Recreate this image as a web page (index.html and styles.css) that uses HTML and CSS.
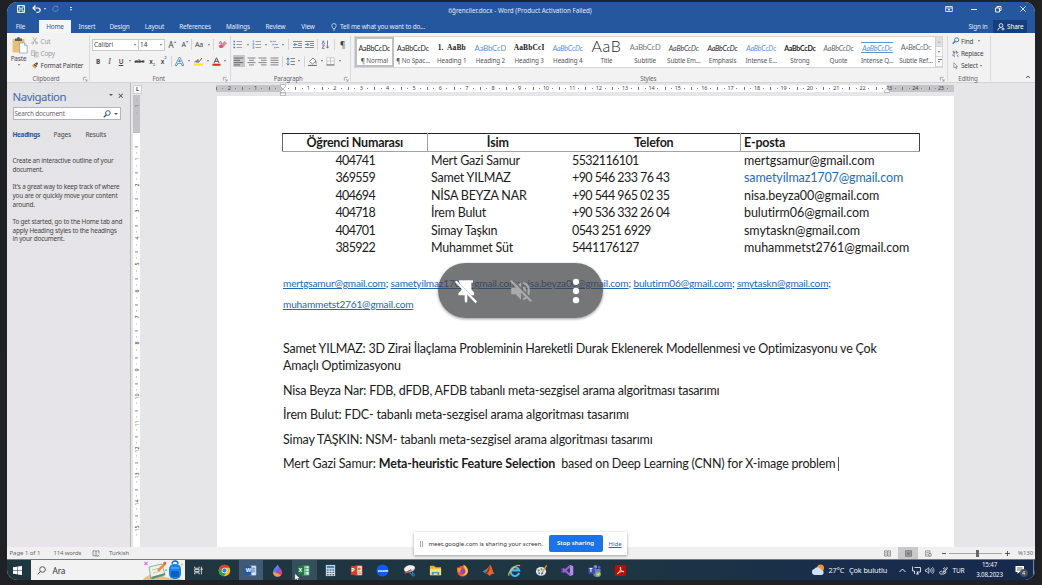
FILE: index.html
```html
<!DOCTYPE html>
<html lang="tr">
<head>
<meta charset="utf-8">
<title>öğrenciler.docx - Word</title>
<link rel="stylesheet" href="styles.css">
</head>
<body>
<div class="desktop">
  <header class="titlebar">
    <div class="quick">
      <svg class="q-save" viewBox="0 0 8 8"><path d="M.5.5h7v7h-7zM2 .5v2.700h4V.5M2 7.500V5h4v2.500" fill="none" stroke="#fff" stroke-width=".9"/></svg>
      <svg class="q-undo" viewBox="0 0 9 8"><path d="M1 3h5a2 2 0 0 1 0 4.300H4.500M3.500.5 1 3l2.500 2.500" fill="none" stroke="#fff" stroke-width="1.200"/></svg>
      <i class="caret white"></i>
      <svg class="q-redo" viewBox="0 0 8 8"><path d="M5.500 1.200A3 3 0 1 0 7 4M4.500.8h2v2" fill="none" stroke="#6f93c8" stroke-width=".9"/></svg>
      <span class="q-more"><i class="caret white"></i></span>
    </div>
    <div class="doc-title">öğrenciler.docx - Word (Product Activation Failed)</div>
    <div class="win-buttons">
      <svg viewBox="0 0 8 8"><path d="M.7 1.500h6.600v5H.7zM.7 3h6.600M4 6V4M3 5l1-1 1 1" fill="none" stroke="#fff" stroke-width=".8"/></svg>
      <svg viewBox="0 0 8 8"><path d="M1 4.500h6" stroke="#fff" stroke-width=".9"/></svg>
      <svg viewBox="0 0 8 8"><path d="M1.500 3h4v4h-4zM3 3V1.500h4v4H5.500" fill="none" stroke="#fff" stroke-width=".9"/></svg>
      <svg viewBox="0 0 8 8"><path d="m1.300 1.300 5.400 5.400M6.700 1.300 1.300 6.700" stroke="#fff" stroke-width=".8"/></svg>
    </div>
  </header>
  <nav class="tabs">
    <span class="tab t-file">File</span><span class="tab t-home">Home</span><span class="tab t-insert">Insert</span><span class="tab t-design">Design</span><span class="tab t-layout">Layout</span><span class="tab t-ref">References</span><span class="tab t-mail">Mailings</span><span class="tab t-review">Review</span><span class="tab t-view">View</span>
    <span class="tell"><svg viewBox="0 0 6 8"><path d="M2 5.500C2 4.500.8 4 .8 2.700a2.200 2.200 0 0 1 4.400 0C5.200 4 4 4.500 4 5.500zM2 7h2" fill="none" stroke="#e3ebf6" stroke-width=".7"/></svg>Tell me what you want to do...</span>
    <span class="signin">Sign in</span>
    <span class="share"><svg viewBox="0 0 8 8"><circle cx="4" cy="2.500" r="1.900" fill="none" stroke="#fff" stroke-width=".8"/><path d="M.8 7.500C1 5.500 2.300 4.600 4 4.500M6 4.500v3M4.500 6h3" fill="none" stroke="#fff" stroke-width=".8"/></svg>Share</span>
  </nav>

  <section class="ribbon">
    <div class="group g-clip">
      <div class="clip-body">
        <div class="paste">
          <svg viewBox="0 0 16 17"><rect x=".5" y="2" width="12" height="13.500" rx=".8" fill="#eabf74"/><path d="M3 1.500h2a1.500 1.500 0 0 1 3 0h2V4H3z" fill="#5d5d60"/><path d="M7.500 6h5l2.700 2.700V16H7.500z" fill="#fff" stroke="#8c96a3" stroke-width=".7"/><path d="M12.500 6v2.700h2.700" fill="none" stroke="#8c96a3" stroke-width=".6"/></svg>
          <span>Paste</span><i class="caret"></i>
        </div>
        <div class="clip-list">
          <span class="off"><svg viewBox="0 0 8 8"><path d="M2 .5 5.500 6M6 .5 2.500 6" stroke="#9a9a9e" stroke-width=".8"/><circle cx="1.800" cy="6.500" r="1.100" fill="none" stroke="#9a9a9e" stroke-width=".7"/><circle cx="6" cy="6.500" r="1.100" fill="none" stroke="#9a9a9e" stroke-width=".7"/></svg>Cut</span>
          <span class="off"><svg viewBox="0 0 8 8"><path d="M.5.800h3.800v5H.5zM3.500 2.500h4v5h-4zM4.500 4h2M4.500 5.500h2M1.200 2.500h1.500" fill="none" stroke="#a5a5a9" stroke-width=".7"/></svg>Copy</span>
          <span><svg viewBox="0 0 8 8"><path d="M4 1.500 6.500 3.500 7.500 1 6 .5z" fill="#48484b"/><path d="M.5 3.500 4 2.500l2 2L4.500 7.500z" fill="#e9a65a"/><path d="m3.600 1.800 3 2.500-1 1-3-2.500z" fill="#555"/></svg>Format Painter</span>
        </div>
      </div>
      <div class="g-label">Clipboard<svg class="launch" viewBox="0 0 5 5"><path d="M.4 4V.4H4M2 2l2.300 2.300M4.500 2.500v2h-2" fill="none" stroke="#88888c" stroke-width=".7"/></svg></div>
    </div>

    <div class="group g-font">
      <div class="row r1">
        <span class="combo c-name">Calibri<i class="caret"></i></span><span class="combo c-size">14<i class="caret"></i></span>
        <span class="w14 big">A<sup class="blue">▴</sup></span><span class="w11 mid">A<sup class="blue">▾</sup></span><span class="w3 sep"></span>
        <span class="w12 aa">Aa</span><span class="w7"><i class="caret"></i></span><span class="w3 sep"></span>
        <span class="w14"><svg viewBox="0 0 9 9"><path d="m3.500 4 3-3L9 3 6 6.500z" fill="#e58a97"/><path d="M.5 6 3.500 4 6 6.500 4 8H2z" fill="#d9596c"/><path d="m1 4 1.500-3L4 4M1.500 3h2" fill="none" stroke="#777" stroke-width=".7"/></svg></span>
      </div>
      <div class="row r2">
        <span class="w12 fb">B</span><span class="w11 fi">I</span><span class="w12 fu">U</span><span class="w6"><i class="caret"></i></span><span class="w13 fs">abc</span><span class="w12 fx">x<sub>2</sub></span><span class="w11 fx">x<sup>2</sup></span><span class="w4 sep"></span>
        <span class="w13"><svg viewBox="0 0 9 9"><path d="M1.200 8 4.500 1.200 7.800 8M2.500 5.500h4" fill="none" stroke="#4b86cc" stroke-width="2.300" stroke-linejoin="round" stroke-linecap="round"/><path d="M1.200 8 4.500 1.200 7.800 8M2.500 5.500h4" fill="none" stroke="#eff5fc" stroke-width=".9"/></svg></span><span class="w5"><i class="caret"></i></span>
        <span class="w14"><svg viewBox="0 0 9 9"><rect y="6.500" width="9" height="2.200" fill="#f7ee12"/><path d="M.8 5.500c0-2 2.200-1.500 2.200 0V3M4 2v3.500M8 1 4.500 5.500" fill="none" stroke="#555" stroke-width=".9"/></svg></span><span class="w5"><i class="caret"></i></span>
        <span class="w12"><svg viewBox="0 0 9 9"><rect x=".5" y="6.700" width="8" height="2.100" fill="#ee2323"/><path d="M2 6 4.500.8 7 6M3 4.300h3" fill="none" stroke="#555" stroke-width="1"/></svg></span><span class="w6"><i class="caret"></i></span>
      </div>
      <div class="g-label">Font<svg class="launch" viewBox="0 0 5 5"><path d="M.4 4V.4H4M2 2l2.300 2.300M4.500 2.500v2h-2" fill="none" stroke="#88888c" stroke-width=".7"/></svg></div>
    </div>

    <div class="group g-para">
      <div class="row r1">
        <span class="w14"><svg viewBox="0 0 9 9"><path d="M3.500 1.500H9M3.500 4.500H9M3.500 7.500H9" stroke="#8b8b8f" stroke-width=".8"/><path d="M.5 1.500H2M.5 4.500H2M.5 7.500H2" stroke="#3f7cc6" stroke-width="1.500"/></svg></span><span class="w6"><i class="caret"></i></span>
        <span class="w12"><svg viewBox="0 0 9 9"><path d="M3.500 1.500H9M3.500 4.500H9M3.500 7.500H9" stroke="#8b8b8f" stroke-width=".8"/><path d="M1.300.3v2.200M.6 3.700h1.200v1.500H.6M.6 6.700h1.200v1.600H.6" fill="none" stroke="#3f7cc6" stroke-width=".7"/></svg></span><span class="w6"><i class="caret"></i></span>
        <span class="w12"><svg viewBox="0 0 9 9"><path d="M2.500 1.500H6M4.500 4.500H8M6 7.500h3" stroke="#8b8b8f" stroke-width=".8"/><path d="M.5 1.500h1M2.500 4.500h1M4.300 7.500h1" stroke="#3f7cc6" stroke-width="1.600"/></svg></span><span class="w5"><i class="caret"></i></span><span class="w5 sep"></span>
        <span class="w13"><svg viewBox="0 0 9 9"><path d="M0 1.500h9M5 3.500h4M5 5.500h4M0 7.500h9" stroke="#7d7d82" stroke-width=".9"/><path d="M4.500 4.500H.8M2.300 3 .8 4.500 2.300 6" fill="none" stroke="#3f7cc6" stroke-width=".9"/></svg></span>
        <span class="w12"><svg viewBox="0 0 9 9"><path d="M0 1.500h9M5 3.500h4M5 5.500h4M0 7.500h9" stroke="#7d7d82" stroke-width=".9"/><path d="M0 4.500h3.700M2.300 3l1.500 1.500L2.300 6" fill="none" stroke="#3f7cc6" stroke-width=".9"/></svg></span><span class="w4 sep"></span>
        <span class="w12"><svg viewBox="0 0 9 9"><path d="m1 4 1.300-3.300L3.600 4" fill="none" stroke="#3f7cc6" stroke-width=".9"/><path d="M1 5h2.500L1 8.300h2.600" fill="none" stroke="#9456a8" stroke-width=".9"/><path d="M6.500.5v7.500M5 6.500l1.500 1.700L8 6.500" fill="none" stroke="#66666a" stroke-width=".8"/></svg></span><span class="w5 sep"></span>
        <span class="w12 pil">¶</span>
      </div>
      <div class="row r2">
        <span class="w15 on"><svg viewBox="0 0 9 9"><path d="M0 1h9M0 3.300h6M0 5.600h9M0 7.900h6" stroke="#5f5f63" stroke-width=".9"/></svg></span>
        <span class="w11"><svg viewBox="0 0 9 9"><path d="M.5 1h8M2 3.300h5M.5 5.600h8M2 7.900h5" stroke="#77777b" stroke-width=".9"/></svg></span>
        <span class="w12"><svg viewBox="0 0 9 9"><path d="M.5 1h8M3 3.300h5.500M.5 5.600h8M3 7.900h5.500" stroke="#77777b" stroke-width=".9"/></svg></span>
        <span class="w11"><svg viewBox="0 0 9 9"><path d="M.5 1h8M.5 3.300h8M.5 5.600h8M.5 7.900h8" stroke="#77777b" stroke-width=".9"/></svg></span><span class="w5 sep"></span>
        <span class="w11"><svg viewBox="0 0 9 9"><path d="M4.500 1.500H9M4.500 4.500H9M4.500 7.500H9" stroke="#77777b" stroke-width=".9"/><path d="M2 1v7M.6 2.500 2 .8l1.400 1.700M.6 6.500 2 8.200l1.400-1.700" fill="none" stroke="#3f7cc6" stroke-width=".9"/></svg></span><span class="w6"><i class="caret"></i></span><span class="w5 sep"></span>
        <span class="w12"><svg viewBox="0 0 9 9"><path d="M1.500 4.500 5 1l3 3-3.500 3z" fill="#fff" stroke="#66666a" stroke-width=".8"/><path d="M8 4.500v2M0 8.400h9" stroke="#66666a" stroke-width="1"/></svg></span><span class="w6"><i class="caret"></i></span>
        <span class="w12"><svg viewBox="0 0 9 9"><path d="M.8.8h7.400v6.500H.8zM4.500.8v6.500M.8 4h7.400" fill="#fff" stroke="#b7b7bb" stroke-width=".7"/><path d="M.5 8h8" stroke="#66666a"/></svg></span><span class="w7"><i class="caret"></i></span>
      </div>
      <div class="g-label">Paragraph<svg class="launch" viewBox="0 0 5 5"><path d="M.4 4V.4H4M2 2l2.300 2.300M4.500 2.500v2h-2" fill="none" stroke="#88888c" stroke-width=".7"/></svg></div>
    </div>

    <div class="group g-styles">
      <div class="gallery">
        <div class="style sel"><b class="s-n">AaBbCcDc</b><span>¶ Normal</span></div>
        <div class="style"><b class="s-n">AaBbCcDc</b><span>¶ No Spac...</span></div>
        <div class="style"><b class="s-h1">1.&nbsp; AaBb</b><span>Heading 1</span></div>
        <div class="style"><b class="s-h2">AaBbCcD</b><span>Heading 2</span></div>
        <div class="style"><b class="s-h3">AaBbCcI</b><span>Heading 3</span></div>
        <div class="style"><b class="s-h4">AaBbCcDc</b><span>Heading 4</span></div>
        <div class="style"><b class="s-t">AaB</b><span>Title</span></div>
        <div class="style"><b class="s-sub">AaBbCcD</b><span>Subtitle</span></div>
        <div class="style"><b class="s-se">AaBbCcDc</b><span>Subtle Em...</span></div>
        <div class="style"><b class="s-em">AaBbCcDc</b><span>Emphasis</span></div>
        <div class="style"><b class="s-h4">AaBbCcDc</b><span>Intense E...</span></div>
        <div class="style"><b class="s-st">AaBbCcDc</b><span>Strong</span></div>
        <div class="style"><b class="s-q">AaBbCcDc</b><span>Quote</span></div>
        <div class="style"><b class="s-iq">AaBbCcDc</b><span>Intense Q...</span></div>
        <div class="style"><b class="s-sr">AaBbCcDc</b><span>Subtle Ref...</span></div>
        <div class="scroller"><span class="dim"><i class="caret up"></i></span><span><i class="caret"></i></span><span class="more"><i class="caret"></i></span></div>
      </div>
      <div class="g-label">Styles<svg class="launch" viewBox="0 0 5 5"><path d="M.4 4V.4H4M2 2l2.300 2.300M4.500 2.500v2h-2" fill="none" stroke="#88888c" stroke-width=".7"/></svg></div>
    </div>

    <div class="group g-edit">
      <div class="edit-list">
        <span><svg viewBox="0 0 8 8"><circle cx="5" cy="3" r="2.200" fill="none" stroke="#3a70b8" stroke-width="1"/><path d="M3.400 4.600.8 7.200" stroke="#3a70b8" stroke-width="1.400"/></svg>Find<i class="caret gap"></i></span>
        <span><svg viewBox="0 0 8 8"><path d="M.8 1.500c1.800-.5 1.800.3 1.800 2-2 0-2.200-1.200 0-1M4.500.5v3c2 .3 2-2 0-1.600" fill="none" stroke="#5b5b60" stroke-width=".8"/><path d="M3.200 5.200c-1.700-.3-1.700 2.300 0 2M7 5.200c-1.700-.3-1.700 2.300 0 2M1 4.500v2" fill="none" stroke="#7a4fa8" stroke-width=".8"/></svg>Replace</span>
        <span><svg viewBox="0 0 8 8"><path d="M2 .8v5.500l1.400-1.200.9 2.200.9-.4-.9-2.100h1.800z" fill="#fff" stroke="#77777b" stroke-width=".7"/></svg>Select<i class="caret"></i></span>
      </div>
      <div class="g-label">Editing</div>
    </div>
    <svg class="collapse" viewBox="0 0 6 4"><path d="m1 3 2-2 2 2" fill="none" stroke="#555" stroke-width="1"/></svg>
  </section>

  <main class="work">
    <aside class="navpane">
      <div class="np-head"><span class="np-title">Navigation</span><i class="caret dark"></i><svg viewBox="0 0 6 6"><path d="m.8.8 4.400 4.400M5.200.8.8 5.200" stroke="#555" stroke-width="1.100"/></svg></div>
      <div class="np-search">Search document<svg viewBox="0 0 8 8"><circle cx="4.900" cy="3" r="2.300" fill="none" stroke="#2b5db0" stroke-width="1"/><path d="M3.200 4.800.8 7.200" stroke="#2b5db0" stroke-width="1.500"/></svg><i class="caret dark"></i></div>
      <div class="np-tabs"><b>Headings</b><span>Pages</span><span>Results</span></div>
      <p>Create an interactive outline of your<br>document.</p>
      <p>It's a great way to keep track of where<br>you are or quickly move your content<br>around.</p>
      <p>To get started, go to the Home tab and<br>apply Heading styles to the headings<br>in your document.</p>
    </aside>
    <div class="vcol">
      <div class="corner">L</div>
      <div class="vruler"><i class="neg">1</i><i></i><i>1</i><i>2</i><i>3</i><i>4</i><i>5</i><i>6</i><i>7</i><i>8</i><i>9</i><i>10</i><i>11</i><i>12</i><i>13</i><i>14</i><i>15</i><i></i></div>
    </div>
    <div class="canvas">
      <div class="hruler">
        <i>2</i><i>1</i><i></i><i>1</i><i>2</i><i>3</i><i>4</i><i>5</i><i>6</i><i>7</i><i>8</i><i>9</i><i>10</i><i>11</i><i>12</i><i>13</i><i>14</i><i>15</i><i>16</i><i>17</i><i>18</i><i>19</i><i>20</i><i>21</i><i>22</i><i>23</i><i>24</i><i>25</i>
        <svg class="m-left" viewBox="0 0 6 12"><path d="M.5.5h5v2L3 5 .5 2.500zM3 5l2.500 2.500v1.300h-5V7.500zM.5 8.800h5v2.700h-5z" fill="#fff" stroke="#a2a2a6" stroke-width=".7"/></svg>
        <svg class="m-right" viewBox="0 0 6 5"><path d="m3 .5 2.500 2.500v1.500h-5V3z" fill="#fff" stroke="#a2a2a6" stroke-width=".7"/></svg>
      </div>
      <article class="page">
        <table class="students">
          <thead><tr><th class="c1">Öğrenci Numarası</th><th class="c2">İsim</th><th class="c3">Telefon</th><th class="c4">E-posta</th></tr></thead>
          <tbody>
            <tr><td class="c1">404741</td><td>Mert Gazi Samur</td><td class="tel">5532116101</td><td class="mail">mertgsamur@gmail.com</td></tr>
            <tr><td class="c1">369559</td><td>Samet YILMAZ</td><td class="tel">+90 546 233 76 43</td><td class="mail lnk">sametyilmaz1707@gmail.com</td></tr>
            <tr><td class="c1">404694</td><td>NİSA BEYZA NAR</td><td class="tel">+90 544 965 02 35</td><td class="mail">nisa.beyza00@gmail.com</td></tr>
            <tr><td class="c1">404718</td><td>İrem Bulut</td><td class="tel">+90 536 332 26 04</td><td class="mail">bulutirm06@gmail.com</td></tr>
            <tr><td class="c1">404701</td><td>Simay Taşkın</td><td class="tel">0543 251 6929</td><td class="mail">smytaskn@gmail.com</td></tr>
            <tr><td class="c1">385922</td><td>Muhammet Süt</td><td class="tel">5441176127</td><td class="mail">muhammetst2761@gmail.com</td></tr>
          </tbody>
        </table>
        <p class="mails"><u>mertgsamur@gmail.com</u>; <u>sametyilmaz1707@gmail.com</u>; <u>nisa.beyza00@gmail.com</u>; <u>bulutirm06@gmail.com</u>; <u>smytaskn@gmail.com</u>;<br><u>muhammetst2761@gmail.com</u></p>
        <p>Samet YILMAZ: 3D Zirai İlaçlama Probleminin Hareketli Durak Eklenerek Modellenmesi ve Optimizasyonu ve Çok<br>Amaçlı Optimizasyonu</p>
        <p>Nisa Beyza Nar: FDB, dFDB, AFDB tabanlı meta-sezgisel arama algoritması tasarımı</p>
        <p class="loose">İrem Bulut: FDC- tabanlı meta-sezgisel arama algoritması tasarımı</p>
        <p class="loose">Simay TAŞKIN: NSM- tabanlı meta-sezgisel arama algoritması tasarımı</p>
        <p><span class="loose">Mert Gazi Samur: </span><b>Meta-heuristic Feature Selection</b>&nbsp; based on Deep Learning (CNN) for X-image problem<i class="cursor"></i></p>
      </article>
    </div>
  </main>

  <footer class="status">
    <span class="st-page">Page 1 of 1</span><span class="st-words">114 words</span>
    <svg class="st-proof" viewBox="0 0 8 8"><path d="M4 1.500C3 .8 1.500.8.6 1v5.500c1-.2 2.400-.2 3.400.5zM4 1.500C5 .8 6.500.8 7.400 1v3M4 7l1-.5M5.500 5.500l2 2M7.500 5.500l-2 2" fill="none" stroke="#6b6b6f" stroke-width=".8"/></svg>
    <span class="st-lang">Turkish</span>
    <span class="views">
      <svg viewBox="0 0 8 8"><path d="M.6 1h3v6h-3zM4.400 1h3v6h-3zM1.500 3h1M5.400 3h1M1.500 5h1M5.400 5h1" fill="none" stroke="#77777b" stroke-width=".8"/></svg>
      <span class="v-on"><svg viewBox="0 0 8 8"><path d="M.6.8h6.800v6.400H.6zM2 2.500h4M2 4h4M2 5.500h4" fill="#aaa" stroke="#66666a" stroke-width=".8"/></svg></span>
      <svg viewBox="0 0 8 8"><path d="M.6 1h5v6h-5zM1.700 3h2.600M1.700 5h1.500" fill="none" stroke="#77777b" stroke-width=".8"/><circle cx="5.700" cy="5.500" r="1.700" fill="#ddd" stroke="#66666a" stroke-width=".7"/></svg>
    </span>
    <span class="zoom"><i class="zminus"></i><span class="track"><i></i></span><i class="zplus"></i></span>
    <span class="pct">%130</span>
  </footer>

  <div class="taskbar">
    <div class="start"><svg viewBox="0 0 9 9"><path d="M0 1.200 4 .7v3.500H0zM4.500.6 9 0v4.200H4.500zM0 4.700h4v3.600l-4-.5zM4.500 4.700H9V9l-4.500-.6z" fill="#fff"/></svg></div>
    <div class="search">
      <svg class="glass" viewBox="0 0 9 9"><circle cx="5.500" cy="3.500" r="2.800" fill="none" stroke="#333" stroke-width=".8"/><path d="M3.400 5.600.6 8.400" stroke="#333" stroke-width=".9"/></svg><span>Ara</span>
      <svg class="school" viewBox="0 0 42 20"><path d="M0 20c3-6 14-7 20-4s14 2 21 4z" fill="#e9bf83"/><path d="m6 7 13-3 3 11-14 4z" fill="#eef3ea" stroke="#7d9c86" stroke-width=".8"/><path d="m8 17 14-4v2L9 19z" fill="#5f8e78"/><path d="m9 10 8-2M10 13l8-2" stroke="#a9b9a9" stroke-width=".7"/><path d="m14 10 7-7 2 1.500-7 7z" fill="#f08a3c"/><path d="m20 3 2-1.500 1.500 1.500L22 5z" fill="#e2574c"/><rect x="26" y="4" width="12" height="15" rx="5" fill="#1683e8"/><path d="M29 4c0-4 6-4 6 0" fill="none" stroke="#1468b8" stroke-width="1.300"/><rect x="28" y="11" width="8" height="6" rx="1.500" fill="#0c5fc0"/><path d="M28 8h8" stroke="#6db8f8" stroke-width="1"/><path d="m1.500 2 3 3M4.500 2l-3 3" stroke="#d07be0" stroke-width="1.100"/><circle cx="39" cy="4.500" r="1" fill="#f4b63d"/><circle cx="23" cy="10" r="1" fill="#4bc4ee"/></svg>
    </div>
    <div class="apps">
      <span><svg class="tv" viewBox="0 0 14 14"><path d="M1 1v2.500h7V1M1 13v-2.500h7V13M1 5.500h7v3H1zM11.500 1v12M10 5h4" fill="none" stroke="#e9eef1" stroke-width="1.300"/></svg></span>
      <span><svg viewBox="0 0 14 14"><circle cx="7" cy="7" r="6.200" fill="#f4c20d"/><path d="M1.600 4A6.200 6.200 0 0 1 12.500 4H7L4.300 8.500z" fill="#e33b2e"/><path d="M1.600 4a6.200 6.200 0 0 0 4.600 9.200L9.300 8.500 7 10 4.500 8.500z" fill="#2ba14b"/><circle cx="7" cy="7" r="3" fill="#fff"/><circle cx="7" cy="7" r="2.300" fill="#3b7de8"/></svg></span>
      <span class="active"><svg viewBox="0 0 14 14"><path d="M6 2h7v10H6z" fill="#e9f0fb" stroke="#7ca2dd" stroke-width=".6"/><path d="M8 4.500h4M8 6.500h4M8 8.500h4" stroke="#2b62b5" stroke-width=".9"/><path d="m1 2.500 7-1v11l-7-1z" fill="#2457a8"/></svg><em>W</em></span>
      <span><svg viewBox="0 0 14 14"><defs><linearGradient id="drop" x1="0" y1="0" x2="1" y2="1"><stop offset=".2" stop-color="#38a8ea"/><stop offset=".55" stop-color="#8a4be0"/><stop offset=".8" stop-color="#ee4466"/></linearGradient></defs><path d="M7 .5C9 4 12 6 12 9a5 4.700 0 0 1-10 0c0-3 3-5 5-8.500z" fill="url(#drop)"/><path d="M2.200 9.500c3-2 6 2 8.500 2.700C8 15 3 14 2.200 9.500z" fill="#f2a23a"/></svg></span>
      <span class="hover"><svg viewBox="0 0 14 14"><path d="M6 2h7v10H6z" fill="#e6f2ea" stroke="#3c9a63" stroke-width=".8"/><path d="M9.500 2v10M8 5h5M8 8h5" stroke="#3c9a63" stroke-width=".8"/><path d="m1 2.500 7-1v11l-7-1z" fill="#1d7a45"/></svg><em>X</em></span>
      <span><svg viewBox="0 0 14 14"><rect x="2" y="1" width="10" height="12" fill="#d9e2e8"/><rect x="3" y="2" width="8" height="2.500" fill="#2d8bd8"/><path d="M3 6.500h8M3 9h8M3 11.500h8" stroke="#53738b" stroke-width="1.500" stroke-dasharray="2 1"/></svg></span>
      <span><svg viewBox="0 0 14 14"><path d="M7 2h6v10H7z" fill="#fff" stroke="#d65532" stroke-width=".8"/><path d="M9 8.500h3M9 10h3" stroke="#d65532" stroke-width=".8"/><circle cx="10" cy="5.500" r="1.600" fill="#e2694a"/><path d="m1 2.500 7-1v11l-7-1z" fill="#cf4426"/></svg><em>P</em></span>
      <span><svg viewBox="0 0 14 14"><circle cx="7" cy="7" r="6.400" fill="#0b5cff"/></svg><em class="zm">zoom</em></span>
      <span><svg viewBox="0 0 14 14"><ellipse cx="7" cy="5" rx="6" ry="3.600" transform="rotate(-12 7 5)" fill="#f2f2f4"/><path d="M2 8c3 2 7 0 10-3" fill="none" stroke="#b9bcc2"/><path d="m2 10 7-4" stroke="#d9483b" stroke-width="1.500"/><circle cx="9" cy="9.500" r="1.500" fill="none" stroke="#3b8fd0"/><circle cx="11" cy="11.500" r="1.300" fill="none" stroke="#3b8fd0"/></svg></span>
      <span><svg viewBox="0 0 14 14"><path d="M1 2h4.500L7 3.500h6V12H1z" fill="#e9b12f"/><path d="M1 5h12v7H1z" fill="#fbdc73"/><path d="M3 12V8.500h8V12H9V10H5v2z" fill="#3e96dd"/></svg></span>
      <span><svg viewBox="0 0 14 14"><circle cx="7" cy="7.700" r="5.800" fill="#f5542f"/><path d="M8 .8c3.500 1.500 5.500 5 4.700 8C11.500 12 8 13 6 12c3 0 5-3 4-5.500S8 3.500 8 .8z" fill="#fdc12f"/><circle cx="6.800" cy="7.800" r="3" fill="#8446d3"/><path d="M1.300 3.500C3 5 5 4 6.500 5.500 5 6 4 8 5 9.500 2 9 1 6 1.300 3.500z" fill="#fb9331"/></svg></span>
      <span><svg viewBox="0 0 14 14"><path d="m.5 8 4-2.500L6 7l-2.500 3z" fill="#3e87c8"/><path d="M4.500 5.500C7 5 7.500 1 9 1c1.500 1 2.500 7 4.500 10-2-1-3-.5-5 2C7 12 6 10 3.500 10 5 8 5.500 7 4.500 5.500z" fill="#e0652c"/><path d="M9 1c-1 3-1 6-2.500 8.500-1-.5-2 .5-3 .5C6 8 7 4 9 1z" fill="#78302a"/></svg></span>
      <span><svg viewBox="0 0 14 14"><path d="M12 9.500A4.700 4.700 0 1 1 12 6.800H4" fill="none" stroke="#46b5ef" stroke-width="2.300"/><path d="M1 12.500C-.5 9 9-.5 13 1.800" fill="none" stroke="#f3c53a" stroke-width="1.200"/></svg></span>
      <span><svg viewBox="0 0 14 14"><ellipse cx="6.500" cy="8" rx="5.500" ry="4.700" fill="#dbe7f1"/><circle cx="4" cy="7" r="1.100" fill="#e0503d"/><circle cx="7" cy="5.800" r="1.100" fill="#3fa65b"/><circle cx="4.500" cy="10" r="1.100" fill="#3d7fd0"/><path d="m7 10.500 5.500-9" stroke="#d9973d" stroke-width="1.500"/><path d="m6.500 12 1-3 1.500 1z" fill="#555"/></svg></span>
      <span><svg viewBox="0 0 14 14"><path d="m9.500.8 3.700 1.500v9.400l-3.700 1.500z" fill="#b98be8"/><path d="M10 2 2 9M10 12 2 5" stroke="#9560d8" stroke-width="2.200"/><path d="M1 4.500v5" stroke="#7a3fc4" stroke-width="1.400"/></svg></span>
      <span><svg viewBox="0 0 14 14"><circle cx="8" cy="3" r="2" fill="#7f86dd"/><circle cx="12" cy="3.600" r="1.400" fill="#5a61c6"/><path d="M5 5.500h8.500v4a4 4 0 0 1-8 1z" fill="#7077d5"/><rect x=".5" y="3.500" width="7" height="7" rx=".7" fill="#454db3"/><circle cx="11" cy="11" r="2.700" fill="#8cc43d"/><path d="m9.700 11 1 1 1.600-1.900" fill="none" stroke="#fff" stroke-width=".8"/></svg><em class="tm">T</em></span>
      <span><svg viewBox="0 0 14 14"><rect x="1" y="1" width="12" height="12" rx="1.500" fill="#b90e05"/><path d="M3.500 10.500C7 8.500 7.500 5 7 3.200c-.8.600 0 4.800 3.700 5.300.6-1-4.500-.8-7.200 2z" fill="none" stroke="#fff" stroke-width=".9"/></svg></span>
    </div>
    <div class="tray">
      <svg class="wx" viewBox="0 0 14 12"><circle cx="9.500" cy="4" r="3.500" fill="#f59331"/><path d="M3.500 11a3 3 0 0 1-.3-5.900 3.700 3.700 0 0 1 6.800.7A2.700 2.700 0 0 1 11 11z" fill="#cfe0fb"/></svg>
      <span class="wt">27°C</span><span class="wc">Çok bulutlu</span>
      <svg class="ic" viewBox="0 0 9 9"><path d="m1.500 6 3-3 3 3" fill="none" stroke="#fff" stroke-width=".9"/></svg>
      <svg class="ic" viewBox="0 0 9 9"><path d="M2.500 1.500h6v4.500h-4M4 8h3M5.500 6v2M.5.500v4.500h2V8" fill="none" stroke="#fff" stroke-width=".8"/></svg>
      <svg class="ic" viewBox="0 0 9 9"><path d="M.6 3.500h1.200l2-1.800v5.600l-2-1.800H.6zM5 3.200c.7.800.7 1.800 0 2.600M6.200 2.200c1.300 1.300 1.300 3.300 0 4.600M7.400 1.200c2 2 2 4.600 0 6.600" fill="none" stroke="#fff" stroke-width=".7"/></svg>
      <svg class="ic" viewBox="0 0 9 9"><path d="M8.300 1.200 4.500 5 3.800 6.500l1.500-.7L8.500 2.500M3 5C1 5-.3 7 1.300 7.800S6 8 7 6.500C7.500 5.500 6 5.500 6 6.500M4 3l2-1.500" fill="none" stroke="#fff" stroke-width=".8"/></svg>
      <span class="lang">TUR</span>
      <span class="clock"><span>15:47</span><span>3.08.2023</span></span>
      <span class="notif"><svg viewBox="0 0 10 10"><path d="M.5 1h8.500v6H4.500L2.500 9V7h-2z" fill="#fff"/><path d="M2 3h5.500M2 5h5.500" stroke="#1a2b49" stroke-width=".7"/></svg><em>4</em></span>
    </div>
  </div>

  <div class="pill">
    <svg viewBox="0 0 24 24"><path d="M5 2h13.500v2.300H17v6.200l2.500 3V16h-2.800L6.500 5.500z" fill="#fff"/><path d="M8 9.500v1.500l-3 3V16h5.800v5.500l1.200 1.500 1.200-1.500V14.800z" fill="#fff"/><path d="m2.500 3 19 19.500" stroke="#fff" stroke-width="2"/></svg>
    <svg viewBox="0 0 24 24"><path d="M3 9h4l5-5v16l-5-5H3z" fill="#a9aaac"/><path d="M14 8.500c2.500 1.500 2.500 5.500 0 7M14 4.500c7 1.500 7 13 0 15" fill="none" stroke="#a9aaac" stroke-width="2"/><path d="m4.500 2.500 18 18" stroke="#727375" stroke-width="2"/><path d="m2.500 2.500 19 19" stroke="#a9aaac" stroke-width="2"/></svg>
    <svg viewBox="0 0 24 24"><circle cx="12" cy="3.500" r="2.900" fill="#fff"/><circle cx="12" cy="12" r="2.900" fill="#fff"/><circle cx="12" cy="20.500" r="2.900" fill="#fff"/></svg>
  </div>

  <div class="sharing">
    <i class="grip"></i><span class="sh-text">meet.google.com is sharing your screen.</span><span class="stop">Stop sharing</span><u>Hide</u>
  </div>
  <svg class="pointer" viewBox="0 0 8 10"><path d="M.5.500v7.500L2.300 6.500 3.500 9.500 5 9 3.700 6H6.300z" fill="#fff" stroke="#222" stroke-width=".4"/></svg>
</div>
</body>
</html>
```
FILE: styles.css
```css
* { box-sizing: border-box; }
html, body { margin: 0; height: 100%; }
body { background: #202124; font-family: "Noto Sans", "Open Sans", sans-serif; font-size: 6.400px; letter-spacing: -.15px; color: #444; overflow: hidden; padding: 2px 7px 5px; }
i, em { font-style: normal; }
svg { display: block; flex: none; overflow: visible; }
.desktop { position: relative; width: 1028px; height: 578px; border-radius: 10px; overflow: hidden; background: #e6e6e8; display: flex; flex-direction: column; white-space: nowrap; }

.caret { display: inline-block; width: 0; height: 0; border: 1.500px solid transparent; border-top: 2px solid #77777b; border-bottom: 0; }
.caret.white { border-top-color: #dfe8f5; }
.caret.dark { border-top-color: #555; border-width: 2px 2px 0; }
.caret.up { border-top: 0; border-bottom: 2px solid #aaa; }

.titlebar { height: 18px; background: #24579d; display: flex; align-items: center; justify-content: space-between; color: #e8eef7; }
.quick { width: 310px; display: flex; align-items: center; padding: 0 0 3px 9.500px; }
.q-save { width: 8px; height: 8px; }
.q-undo { width: 9px; height: 8px; margin: 0 3px 0 7.500px; }
.q-redo { width: 7px; height: 8px; margin: 0 10.500px 0 6px; }
.q-more { border-top: 1px solid #dfe8f5; padding-top: 1px; display: flex; }
.doc-title { font-size: 6.250px; letter-spacing: 0; }
.win-buttons { width: 312px; display: flex; justify-content: flex-end; gap: 16.500px; padding: 0 8px 3px 0; }
.win-buttons svg { width: 8px; height: 8px; }

.tabs { height: 13.500px; background: #24579d; display: flex; color: #e3ebf6; line-height: 13px; }
.tab { text-align: center; }
.t-file { width: 26px; padding-left: 1px; margin-right: 6px; }
.t-home { width: 32px; background: #f4f5f7; color: #2b5797; }
.t-insert { width: 32px; } .t-design { width: 33px; } .t-layout { width: 37px; } .t-ref { width: 44px; } .t-mail { width: 42px; } .t-review { width: 33px; } .t-view { width: 32px; }
.tell { width: 560px; display: flex; align-items: center; gap: 3px; padding-left: 7px; }
.tell svg { width: 6px; height: 8px; }
.signin { width: 30px; margin-left: auto; text-align: center; }
.share { width: 34px; margin-right: 8px; background: #143f7c; color: #fff; display: flex; align-items: center; justify-content: center; gap: 2.500px; }
.share svg { width: 8px; height: 8px; }

.ribbon { height: 49.500px; background: #f2f2f3; border-bottom: 1px solid #d3d3d6; display: flex; position: relative; padding-top: 3px; }
.group { border-right: 1px solid #d9d9dc; height: 44.500px; display: flex; flex-direction: column; }
.g-label { margin-top: auto; text-align: center; font-size: 6.200px; line-height: 8px; color: #66666a; padding-right: 4px; margin-bottom: -2px; position: relative; }
.launch { position: absolute; right: 2px; bottom: 1.500px; width: 4.500px; height: 4.500px; }
.g-clip { width: 83px; }
.clip-body { display: flex; }
.paste { width: 23px; display: flex; flex-direction: column; align-items: center; line-height: 8px; gap: 1px; }
.paste svg { width: 16px; height: 17px; margin: 1px 0 0 2px; }
.clip-list { display: flex; flex-direction: column; margin: -1.500px 0 0 1px; }
.clip-list span { height: 12.400px; display: flex; align-items: center; gap: 2px; color: #3e3e42; }
.clip-list svg { width: 7.500px; height: 7.500px; }
.clip-list .off { color: #98989c; }
.row { display: flex; align-items: center; height: 14px; }
.row > span { display: flex; align-items: center; justify-content: center; height: 12px; flex: none; }
.row svg { width: 9px; height: 9px; }
.r1 { margin-top: 1.500px; } .r2 { margin-top: 2.500px; }
.w3 { width: 3px; } .w4 { width: 4px; } .w5 { width: 5px; } .w6 { width: 6px; } .w7 { width: 7px; } .w11 { width: 11px; } .w12 { width: 12px; } .w13 { width: 13px; } .w14 { width: 14px; } .w15 { width: 15px; }
.row .sep { background: linear-gradient(#d4d4d8, #d4d4d8) center / 1px 11px no-repeat; }
.g-font { width: 140.500px; padding-left: 2px; }
.row .combo { background: #fff; border: 1px solid #c9c9cd; justify-content: space-between; padding: 0 2.500px 0 1px; height: 12px; color: #444; letter-spacing: 0; }
.row .c-name { width: 47px; } .row .c-size { width: 27px; margin-left: -1px; }
.big { font-size: 8px; } .mid { font-size: 7px; } .big sup, .mid sup { font-size: 4px; align-self: flex-start; line-height: 5px; }
.blue { color: #3f7cc6; }
.aa { font-size: 7px; }
.fb { font-weight: 700; } .fi { font-style: italic; font-family: "Liberation Serif", serif; font-size: 8px; } .fu { text-decoration: underline; font-weight: 600; } .fs { text-decoration: line-through; font-size: 6px; font-weight: 600; } .fx { font-weight: 600; } .fx sub, .fx sup { font-size: 4px; color: #3f7cc6; }
.fx sub { align-self: flex-end; } .fx sup { align-self: flex-start; }
.g-para { width: 120.500px; }
.row .on { width: 12px; margin: 0 1px 0 2px; background: #c6c6ca; }
.pil { font-size: 8px; }

.g-styles { width: 596.500px; padding-left: 3px; }
.gallery { width: 589px; height: 31.500px; display: flex; background: #fff; border: 1px solid #d6d6d9; }
.style { width: 38.700px; display: flex; flex-direction: column; align-items: center; overflow: hidden; flex: none; }
.style.sel { outline: 2px solid #bfbfc3; outline-offset: -2px; }
.style b { height: 20px; width: 32px; overflow: hidden; font: 400 7px/22px Lato, "Noto Sans", sans-serif; color: #222; display: flex; justify-content: center; }
.style span { line-height: 8px; color: #55555a; font-size: 6.300px; letter-spacing: -.1px; }
.style .s-h1 { font: 700 7.500px/22px "Liberation Serif", serif; letter-spacing: .1px; }
.style .s-h2 { color: #5a93cf; font-size: 7.700px; }
.style .s-h3 { font: 700 7.500px/22px "Liberation Serif", serif; letter-spacing: .1px; }
.style .s-h4 { color: #5a93cf; font-style: italic; }
.style .s-t { font-size: 16px; line-height: 18px; letter-spacing: .6px; font-weight: 300; }
.style .s-sub { color: #77777b; font-size: 7.500px; }
.style .s-se { font-style: italic; color: #444; }
.style .s-em { font-style: italic; }
.style .s-st { font-weight: 700; letter-spacing: -.25px; }
.style .s-q { font-style: italic; color: #66666a; }
.style .s-iq { font-style: italic; color: #5a93cf; border-top: 1px solid #5a93cf; border-bottom: 1px solid #5a93cf; height: 11px; line-height: 10px; margin: 5px 0 4px; }
.style .s-sr { color: #66666a; font-variant-caps: small-caps; font-size: 7.200px; letter-spacing: -.3px; }
.scroller { width: 7.500px; border-left: 1px solid #d0d0d4; display: flex; flex-direction: column; }
.scroller span { flex: 1; display: flex; align-items: center; justify-content: center; border-bottom: 1px solid #d6d6d9; background: #fafafb; }
.scroller .dim { background: #dededf; }
.scroller .more::before { content: ""; width: 4px; height: 1px; background: #77777b; margin: -5px -3.500px 0 0; }
.g-edit { width: 43px; }
.edit-list { display: flex; flex-direction: column; padding-left: 4px; margin-top: -1.500px; }
.edit-list span { height: 12.400px; display: flex; align-items: center; gap: 2px; }
.edit-list svg { width: 7.500px; height: 7.500px; }
.edit-list .gap { margin-left: 3px; }
.g-edit .g-label { padding-right: 1px; }
.collapse { position: absolute; right: 4px; bottom: 3px; width: 6px; height: 4px; }

.work { height: 465px; display: flex; overflow: hidden; }
.navpane { width: 124px; border-right: 1px solid #b9b9bd; padding: 4.500px 0 0 5.500px; background: linear-gradient(#e4e3e6, #e8e5e9); }
.np-head { display: flex; align-items: center; height: 20px; }
.np-title { font-size: 11.400px; color: #3c68ad; width: 96.500px; letter-spacing: -.45px; margin-top: -1px; }
.np-head .caret { margin: -4px 5px 0 0; } .np-head svg { width: 5.500px; height: 5.500px; margin-top: -4px; }
.np-search { width: 108px; height: 12.500px; background: #fff; border: 1px solid #b5b5b9; display: flex; align-items: center; padding: 0 2px 0 1px; color: #66666a; }
.np-search svg { width: 8px; height: 8px; margin-left: auto; margin-right: 3px; }
.np-tabs { display: flex; height: 26px; align-items: center; margin: 1.500px 0 9.800px; }
.np-tabs b { width: 33px; color: #2b5797; letter-spacing: -.3px; } .np-tabs span { padding-left: 8px; width: 32px; }
.navpane p { margin: 0 0 8.700px; line-height: 8.670px; letter-spacing: -.18px; }
.vcol { width: 11px; padding: 2px 0 0 2px; }
.corner { width: 8.500px; height: 9.500px; background: #fafafa; border: 1px solid #cfcfd2; font-size: 5px; line-height: 7px; text-align: center; font-weight: 700; }
.vruler { width: 6.500px; height: 452px; margin-top: 1px; background: linear-gradient(#c3c3c6 38px, #fff 38px); overflow: hidden; }
.vruler i { display: flex; height: 26.400px; align-items: center; justify-content: center; font-size: 5.300px; color: #333; writing-mode: vertical-rl; transform: rotate(180deg); background: linear-gradient(#88888c, #88888c) center 100% / 3px 1px no-repeat, linear-gradient(#aaa, #aaa) center 25% / 1px 1px no-repeat, linear-gradient(#aaa, #aaa) center 75% / 1px 1px no-repeat; }
.vruler .neg { margin-top: -2.500px; }
.canvas { width: 893px; padding-left: 74px; }
.hruler { width: 738px; height: 7px; margin-top: 2px; display: flex; position: relative; background: linear-gradient(90deg, #c5c5c8 67px, #fff 67px, #fff 671px, #c5c5c8 671px); }
.hruler i { flex: none; width: 26.400px; line-height: 7px; text-align: center; font-size: 5.500px; color: #444448; background: linear-gradient(#77777b, #77777b) 0 center / 1px 3px no-repeat, linear-gradient(#88888c, #88888c) 25% center / 1px 1px no-repeat, linear-gradient(#88888c, #88888c) 75% center / 1px 1px no-repeat; }
.hruler i:nth-of-type(28) { width: 25px; }
.m-left { position: absolute; left: 64px; top: -1px; width: 6px; height: 12px; } .m-right { position: absolute; left: 668px; top: 3px; width: 6px; height: 5px; }
.page { width: 737px; height: 453px; margin: 4px 0 0 1px; background: #fff; padding: 37px 0 0 66px; font-family: Lato, "Noto Sans", sans-serif; font-size: 12.500px; letter-spacing: -.22px; color: #1b1b1b; }
.students { border-collapse: collapse; table-layout: fixed; width: 637px; margin-left: -1px; }
.students th { height: 18px; padding: 0; line-height: 17px; font-weight: 700; border: 1px solid #a2a2a2; border-top-color: #222; }
.students th:first-child { border-left-color: #666; } .students th:last-child { border-right-color: #444; text-align: left; padding-left: 3.500px; }
.students th.c3 { border-left: 0; } .students th.c2 { border-right: 0; }
.students td { padding: 0 0 0 4px; height: 17.500px; line-height: 17.500px; }
.students td.c1 { text-align: center; padding: 0 0 0 1px; letter-spacing: -.68px; }
.students .tel { letter-spacing: -.57px; } .students .mail { letter-spacing: -.05px; } .students .lnk { color: #1c6cc0; letter-spacing: -.12px; }
th.c1 { width: 144.500px; } th.c2 { width: 141px; } th.c3 { width: 172px; } th.c4 { width: 179px; }
.page p { margin: 0 0 7px; line-height: 17.500px; }
.page b { letter-spacing: -.16px; }
.page .loose { letter-spacing: -.16px; }
.page .mails { font-size: 10.100px; line-height: 21px; margin: 16px 0 25px; color: #333; letter-spacing: -.17px; }
.mails u { color: #2368b0; }
.cursor { display: inline-block; width: 1px; height: 14px; background: #555; margin-left: 3px; vertical-align: -3px; }

.status { height: 12px; background: #f0f0f1; display: flex; align-items: center; font-size: 6px; color: #66666a; padding-left: 2.500px; }
.st-page { width: 44px; } .st-words { width: 38px; } .st-proof { width: 8px; height: 7px; margin-right: 9.500px; }
.st-page, .st-lang { letter-spacing: -.05px; }
.views { display: flex; align-items: center; margin-left: auto; gap: 7px; }
.views svg { width: 7px; height: 7px; } .v-on { background: #c9c9cc; padding: 2.500px 6.500px; }
.zoom { display: flex; align-items: center; margin: 0 8px 0 9px; gap: 3px; }
.zminus, .zplus { width: 5px; height: 5px; background: linear-gradient(#555, #555) center / 4px 1px no-repeat; }
.zplus { background: linear-gradient(#555, #555) center / 5px 1px no-repeat, linear-gradient(#555, #555) center / 1px 5px no-repeat; }
.track { width: 53px; height: 7px; background: linear-gradient(#a5a5a9, #a5a5a9) center / 100% 1px no-repeat; }
.track i { display: block; width: 3px; height: 7px; background: #66666a; margin-left: 27px; }
.pct { width: 17px; letter-spacing: -.05px; }

.taskbar { flex: 1; display: flex; align-items: center; background: linear-gradient(90deg, #20363f, #1e3543 60%, #182c4c 85%, #16294e); border-top: 1px solid #6d7b86; }
.start { width: 24px; display: flex; justify-content: center; padding-right: 3px; } .start svg { width: 9px; height: 9px; }
.search { width: 154px; height: 100%; background: #f2f2f2; display: flex; align-items: center; padding-left: 6px; font-size: 8.300px; color: #333; }
.glass { width: 9px; height: 9px; margin-right: 6.500px; } .school { width: 42px; height: 20px; margin-left: auto; }
.apps { display: flex; height: 100%; }
.apps span { width: 26.400px; display: flex; align-items: center; justify-content: center; position: relative; }
.apps svg { width: 13px; height: 13px; }
.apps .tv { width: 9px; height: 9px; }
.apps .active { background: linear-gradient(90deg, transparent 1px, #3f5a72 1px 25px, transparent 25px); } .apps .hover { background: linear-gradient(90deg, transparent 1px, #33505c 1px); }
.apps em { position: absolute; left: 8px; top: 6px; font-size: 5.500px; line-height: 9px; color: #fff; font-weight: 700; }
.apps .zm { left: 0; right: 0; text-align: center; font-size: 4px; } .apps .tm { left: 8.500px; }
.tray { margin-left: auto; display: flex; align-items: center; color: #f0f3f7; font-size: 7.400px; height: 100%; }
.wx { width: 14px; height: 12px; margin-right: 4px; } .wt { width: 20.500px; } .wc { width: 49px; }
.ic { width: 9px; height: 9px; margin-right: 4.500px; } .lang { width: 23.500px; font-size: 6.500px; padding-left: .5px; }
.clock { width: 28px; display: flex; flex-direction: column; align-items: center; font-size: 6.200px; line-height: 9.800px; }
.notif { width: 30px; height: 100%; border-right: 1px solid #7486a3; margin-right: 1.500px; position: relative; display: flex; align-items: center; padding-left: 11px; }
.notif svg { width: 10px; height: 10px; } .notif em { position: absolute; left: 16px; top: 9px; width: 8px; height: 8px; border-radius: 50%; background: #4a4f5a; font-size: 5.500px; line-height: 8px; text-align: center; }

.pill { position: absolute; left: 431px; top: 261px; width: 165px; height: 55px; border-radius: 28px; background: rgba(64, 65, 67, .72); box-shadow: 0 1px 3px rgba(0,0,0,.4); display: flex; align-items: center; padding-left: 15px; gap: 29px; }
.pill svg { width: 26px; height: 26px; }
.sharing { position: absolute; left: 407px; top: 530px; width: 213px; height: 23px; background: #fff; box-shadow: 0 1px 3px rgba(0,0,0,.35); display: flex; align-items: center; font-size: 6px; letter-spacing: 0; color: #333; }
.grip { width: 3px; height: 6px; margin: 0 6px 0 5.500px; border: solid #aaa; border-width: 0 1px; } .sh-text { width: 120px; }
.stop { width: 54px; height: 17px; border-radius: 2px; background: #1a73e8; color: #fff; font-weight: 600; line-height: 16px; text-align: center; margin-right: 6px; }
.sharing u { color: #1a67d0; }
.pointer { position: absolute; left: 287px; top: 571px; width: 8px; height: 9px; }
```
